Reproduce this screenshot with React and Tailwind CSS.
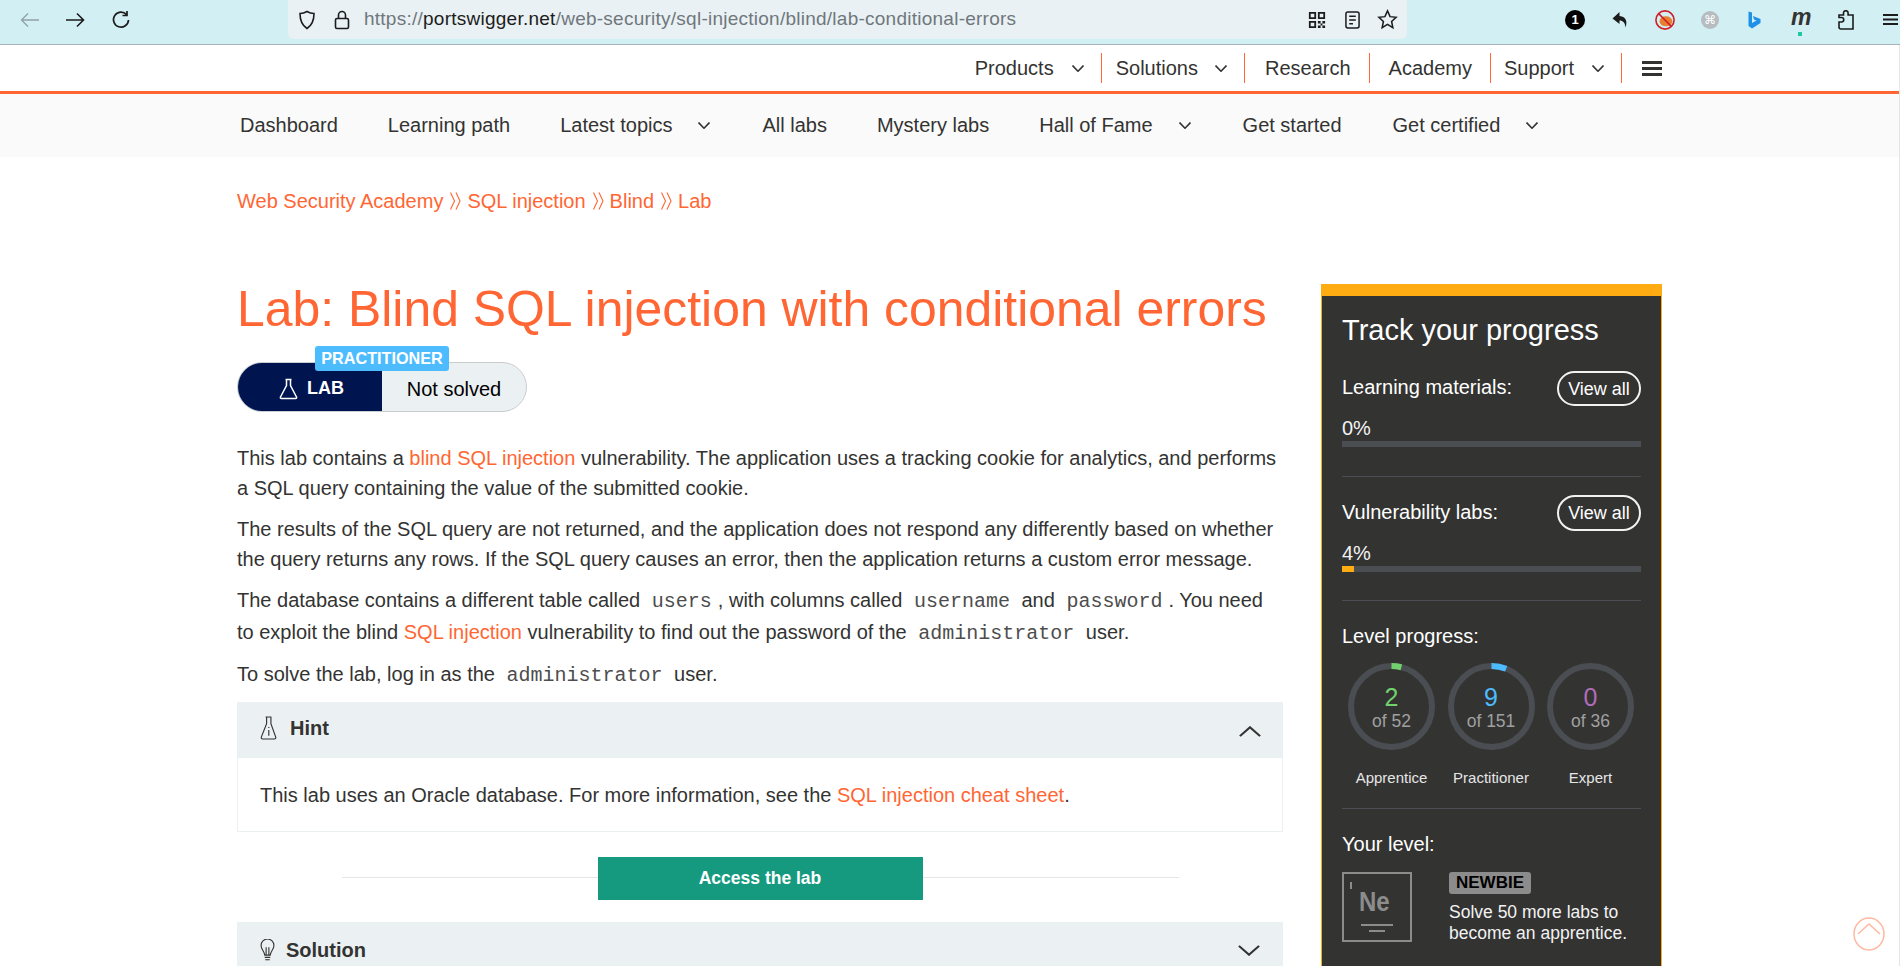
import React from "react";

const O = "text-[#ff6633]";
const Chev = ({ className = "", up = false, w = 12, h = 7, sw = 1.6 }) => (
  <svg width={w} height={h} viewBox="0 0 12 7" className={className} fill="none" stroke="currentColor" strokeWidth={sw} preserveAspectRatio="none">
    <path d={up ? "M0.5 6.5 6 0.8l5.5 5.7" : "M0.5 0.5 6 6.2l5.5-5.7"} />
  </svg>
);
const Code = ({ children }) => (
  <span className="font-['Liberation_Mono',monospace] text-[20px] leading-none mx-[6px] text-[#4d4d4d]">{children}</span>
);
const Link = ({ children }) => <a className={O}>{children}</a>;
const Crumb = () => (
  <svg width="11" height="18" viewBox="0 0 11 18" className="ml-[7px] mr-[6px]" fill="none" stroke="#ff6633" strokeWidth="1.1">
    <path d="M0.500 0.500 4.500 9l-4 8.500M6 0.500 10 9l-4 8.500" />
  </svg>
);

function BrowserBar() {
  return (
    <div className="h-[45px] bg-[#d2eff4] border-b border-[#a3b3b7] flex items-start text-[#1c1c1c]">
      <div className="w-[288px] h-[39px] flex items-center shrink-0">
        <svg width="20" height="16" viewBox="0 0 20 16" className="ml-[20px] text-[#8fa3a8]" fill="none" stroke="currentColor" strokeWidth="1.3"><path d="M19 8H1.500M8 1.500 1.500 8 8 14.500" /></svg>
        <svg width="20" height="16" viewBox="0 0 20 16" className="ml-[25px]" fill="none" stroke="currentColor" strokeWidth="1.6"><path d="M1 8h17.500M12 1.500 18.500 8 12 14.500" /></svg>
        <svg width="20" height="20" viewBox="0 0 20 20" className="ml-[26px]" fill="none" stroke="currentColor" strokeWidth="1.7"><path d="M15.500 4.500A7.500 7.500 0 1 0 17.500 10M16 1v4.500h-4.500" /></svg>
      </div>
      <div className="w-[1119px] h-[39px] bg-[#e9f1f4] rounded-b-[6px] flex items-center shrink-0">
        <svg width="18" height="20" viewBox="0 0 18 20" className="ml-[10px]" fill="none" stroke="currentColor" strokeWidth="1.6"><path d="M9 1.500c2.500 1.500 5 2 7 2 0 7-1.500 11.500-7 15-5.500-3.500-7-8-7-15 2 0 4.500-.5 7-2z" /></svg>
        <svg width="16" height="20" viewBox="0 0 16 20" className="ml-[18px]" fill="none" stroke="currentColor" strokeWidth="1.6"><rect x="1.500" y="8.500" width="13" height="10" rx="1.500" /><path d="M4.500 8.500V5a3.500 3.500 0 0 1 7 0v3.500" /></svg>
        <div className="ml-[14px] text-[19px] tracking-[0.25px] text-[#70777c] whitespace-nowrap">
          https://<span className="text-[#1c1c1c]">portswigger.net</span>/web-security/sql-injection/blind/lab-conditional-errors
        </div>
        <div className="ml-auto flex items-center">
          <svg width="18" height="18" viewBox="0 0 20 20" fill="currentColor"><path d="M1 1h8v8H1zM3 3v4h4V3zM11 1h8v8h-8zM13 3v4h4V3zM1 11h8v8H1zM3 13v4h4v-4zM11 11h3v3h-3zM16 11h3v3h-3zM14 14h2v2h-2zM11 16h3v3h-3zM16 16h3v3h-3z" /></svg>
          <svg width="15" height="20" viewBox="0 0 16 20" className="ml-[19px]" fill="none" stroke="currentColor" strokeWidth="1.6"><rect x="1" y="1.500" width="14" height="17" rx="2" /><path d="M4.500 6h7M4.500 10h7M4.500 14h4" /></svg>
          <svg width="21" height="21" viewBox="0 0 22 22" className="ml-[17px] mr-[9px]" fill="none" stroke="currentColor" strokeWidth="1.6"><path d="m11 2 2.700 6 6.300.7-4.700 4.300 1.300 6.500-5.600-3.300-5.600 3.300 1.300-6.500L2 8.700 8.300 8z" /></svg>
        </div>
      </div>
      <div className="flex-1 h-[39px] flex items-center relative">
        <span className="absolute left-[158px] w-[20px] h-[20px] rounded-full bg-black text-white text-[13px] font-bold flex items-center justify-center">1</span>
        <svg width="19" height="18" viewBox="0 0 18 18" className="absolute left-[204px]" fill="currentColor"><path d="M8 1 1 7.500 8 13V9.500c3.500 0 5.500 2 6 7 2-5.500 1-11-6-11.500z" /></svg>
        <svg width="20" height="20" viewBox="0 0 22 22" className="absolute left-[248px]"><circle cx="11" cy="11" r="10" fill="#d2eff4" stroke="#d0202a" strokeWidth="1.800" /><ellipse cx="12" cy="12.500" rx="7" ry="5.500" fill="#e8812f" /><path d="M4 4l14 14" stroke="#d0202a" strokeWidth="1.800" /></svg>
        <span className="absolute left-[294px] w-[18px] h-[18px] rounded-full bg-[#b6bcbf] text-white text-[12px] flex items-center justify-center font-['DejaVu_Sans',sans-serif]">⌘</span>
        <svg width="13" height="18" viewBox="0 0 13 18" className="absolute left-[341px]"><path d="M0.500 0.500 4 1.500V12l4.500-2.500L6 8.500 5 5l7.500 3v4L4 17.500.5 15z" fill="#1e90e8" /></svg>
        <span className="absolute left-[384px] top-[2px] text-[23px] font-bold italic text-[#333] leading-[30px]">m</span>
        <span className="absolute left-[391px] top-[32px] w-[4px] h-[4px] bg-[#1fc8a0]" />
        <svg width="16" height="20" viewBox="0 0 16 20" className="absolute left-[431px]" fill="none" stroke="currentColor" strokeWidth="1.6"><path d="M1 12h2.500a2 2 0 0 0 0-4.500H1V5h4.500V3a2.300 2.300 0 0 1 4.600 0v2H15v14H3a2 2 0 0 1-2-2z" /></svg>
        <svg width="15" height="11" viewBox="0 0 15 11" className="absolute left-[476px]" fill="none" stroke="currentColor" strokeWidth="1.800"><path d="M0 1h15M0 5.500h15M0 10h15" /></svg>
      </div>
    </div>
  );
}

function TopNav() {
  const Sep = () => <span className="w-px h-[30px] bg-[#ff6633]" />;
  return (
    <div className="h-[46px] flex items-center justify-end pr-[238px] text-[20px] text-[#333332]">
      <span>Products</span>
      <Chev className="ml-[18px] mr-[17px] mt-[1px]" />
      <Sep />
      <span className="ml-[14px]">Solutions</span>
      <Chev className="ml-[17px] mr-[17px] mt-[1px]" />
      <Sep />
      <span className="ml-[20px] mr-[18px]">Research</span>
      <Sep />
      <span className="ml-[19px] mr-[18px]">Academy</span>
      <Sep />
      <span className="ml-[13px]">Support</span>
      <Chev className="ml-[18px] mr-[17px] mt-[1px]" />
      <Sep />
      <span className="ml-[20px] flex flex-col gap-[3px]">
        <span className="block w-[20px] h-[3px] bg-[#333332]" />
        <span className="block w-[20px] h-[3px] bg-[#333332]" />
        <span className="block w-[20px] h-[3px] bg-[#333332]" />
      </span>
    </div>
  );
}

function SubNav() {
  return (
    <div className="h-[63px] bg-[#fafafa] flex items-center pl-[240px] pb-[2px] text-[20px] text-[#333332] whitespace-nowrap">
      <span>Dashboard</span>
      <span className="ml-[50px]">Learning path</span>
      <span className="ml-[50px]">Latest topics</span>
      <Chev className="ml-[26px] mt-[1px]" />
      <span className="ml-[52px]">All labs</span>
      <span className="ml-[50px]">Mystery labs</span>
      <span className="ml-[50px]">Hall of Fame</span>
      <Chev className="ml-[26px] mt-[1px]" />
      <span className="ml-[52px]">Get started</span>
      <span className="ml-[51px]">Get certified</span>
      <Chev className="ml-[26px] mt-[1px]" />
    </div>
  );
}

function Ring({ n, of, label, color, dash }) {
  const r = 40.5;
  const c = 2 * Math.PI * r;
  return (
    <div className="w-[87px] flex flex-col items-center">
      <div className="relative w-[87px] h-[87px]">
        <svg width="87" height="87" viewBox="0 0 87 87">
          <circle cx="43.5" cy="43.5" r={r} fill="none" stroke="#4a4d52" strokeWidth="6" />
          <circle cx="43.5" cy="43.5" r={r} fill="none" stroke={color} strokeWidth="6" strokeDasharray={`${dash} ${c}`} transform="rotate(-90 43.5 43.5)" />
        </svg>
        <div className="absolute inset-0 flex flex-col items-center pt-[20px]">
          <span className="text-[25px] leading-[29px]" style={{ color }}>{n}</span>
          <span className="text-[17.5px] leading-[18px] text-[#a0a0a0]">{of}</span>
        </div>
      </div>
      <span className="mt-[18px] text-[15px] leading-[20px] text-[#e6e6e6] whitespace-nowrap">{label}</span>
    </div>
  );
}

function Sidebar() {
  const Row = ({ title, pct, bar, h }) => (
    <div>
      <div className="flex justify-between items-center" style={{ height: h }}>
        <span className="text-[20px] text-white mt-[-3px]">{title}</span>
        <span className="w-[84px] h-full border-2 border-[#f2f2f2] rounded-full text-[18px] text-white flex items-center justify-center pt-[1px]">View all</span>
      </div>
      <div className="mt-[10px] text-[20px] leading-[24px] text-[#f2f2f2]">{pct}</div>
      <div className="h-[6px] mt-[1px] bg-[#4a4d52]">
        {bar && <div className="h-full w-[12px] bg-[#ffab12]" />}
      </div>
    </div>
  );
  return (
    <aside className="w-[341px] h-[700px] shrink-0 bg-[#333332] border-t-[12px] border-x border-[#ffab12] px-[20px] pt-[15px]">
      <h2 className="text-[29px] leading-[38px] text-white">Track your progress</h2>
      <div className="mt-[22px]"><Row title="Learning materials:" pct="0%" h={35} /></div>
      <div className="h-px bg-[#4a4d52] mt-[29px]" />
      <div className="mt-[18px]"><Row title="Vulnerability labs:" pct="4%" bar h={36} /></div>
      <div className="h-px bg-[#4a4d52] mt-[28px]" />
      <div className="mt-[23px] text-[20px] leading-[24px] text-white">Level progress:</div>
      <div className="mt-[15px] pl-[6px] pr-[7px] flex justify-between">
        <Ring n="2" of="of 52" label="Apprentice" color="#70d16d" dash={10} />
        <Ring n="9" of="of 151" label="Practitioner" color="#4cbcff" dash={15} />
        <Ring n="0" of="of 36" label="Expert" color="#b06cb8" dash={0} />
      </div>
      <div className="h-px bg-[#4a4d52] mt-[20px]" />
      <div className="mt-[23px] text-[20px] leading-[24px] text-white">Your level:</div>
      <div className="mt-[16px] flex">
        <div className="relative w-[70px] h-[70px] border-[2px] border-[#8c8c8c] shrink-0">
          <span className="absolute left-[15px] top-[12px] text-[24px] leading-[32px] font-bold text-[#8c8c8c] scale-y-[1.15]">Ne</span>
          <span className="absolute left-[6px] top-[8px] w-[2px] h-[7px] bg-[#8c8c8c]" />
          <span className="absolute left-[17px] top-[50px] w-[32px] h-[2px] bg-[#8c8c8c]" />
          <span className="absolute left-[25px] top-[56px] w-[16px] h-[2px] bg-[#8c8c8c]" />
        </div>
        <div className="ml-[37px]">
          <span className="block w-[82px] h-[22px] rounded-[3px] bg-[#8c8c8c] text-black text-[17px] font-bold leading-[22px] text-center">NEWBIE</span>
          <div className="mt-[8px] text-[17.5px] leading-[21px] text-[#f2f2f2] whitespace-nowrap">Solve 50 more labs to<br />become an apprentice.</div>
        </div>
      </div>
    </aside>
  );
}

function Main() {
  return (
    <div className="w-[1046px] shrink-0 text-[20px] text-[#333332]">
      <h1 className={`text-[49.9px] leading-[50px] ${O} whitespace-nowrap`}>Lab: Blind SQL injection with conditional errors</h1>
      <div className="relative mt-[28px] w-[290px] h-[50px] rounded-full border border-[#c9cdd0] bg-[#ebf0f2] flex">
        <div className="w-[144px] h-full bg-[#001550] rounded-l-full flex items-center justify-center text-white font-bold text-[18px] pl-[3px] pt-[3px]">
          <svg width="19" height="22" viewBox="0 0 19 22" fill="none" stroke="currentColor" strokeWidth="1.5" className="mr-[9px]"><path d="M6.500 1.500h6M7.500 1.500v6L1.500 19a1 1 0 0 0 1 1.500h14a1 1 0 0 0 1-1.500l-6-11.500v-6" /></svg>
          LAB
        </div>
        <div className="flex-1 flex items-center justify-center text-black text-[20px] pt-[3px]">Not solved</div>
        <span className="absolute left-[77px] top-[-17px] w-[134px] h-[25px] rounded-[3px] bg-[#4cbcff] text-white text-[16.2px] font-bold flex items-center justify-center">PRACTITIONER</span>
      </div>
      <p className="mt-[31px] leading-[30px]">This lab contains a <Link>blind SQL injection</Link> vulnerability. The application uses a tracking cookie for analytics, and performs a SQL query containing the value of the submitted cookie.</p>
      <p className="mt-[11px] leading-[30px]">The results of the SQL query are not returned, and the application does not respond any differently based on whether the query returns any rows. If the SQL query causes an error, then the application returns a custom error message.</p>
      <p className="mt-[10px] leading-[32px]">The database contains a different table called <Code>users</Code>, with columns called <Code>username</Code> and <Code>password</Code>. You need to exploit the blind <Link>SQL injection</Link> vulnerability to find out the password of the <Code>administrator</Code> user.</p>
      <p className="mt-[10px] leading-[32px]">To solve the lab, log in as the <Code>administrator</Code> user.</p>
      <div className="mt-[12px] border-x border-b border-[#ebf0f2]">
        <div className="h-[56px] bg-[#ebf0f2] flex items-center pl-[22px] pr-[22px] -mx-px">
          <svg width="20" height="24" viewBox="0 0 20 25" className="mt-[-5px]" fill="none" stroke="currentColor" strokeWidth="1.2"><path d="M6.500 1h6M7.500 1v7L2 22a1.500 1.500 0 0 0 1.500 2h12a1.500 1.500 0 0 0 1.500-2L12 8V1M9.800 11.500v1M9.800 14.500v6" /></svg>
          <span className="ml-[11px] font-bold mt-[-5px]">Hint</span>
          <Chev up w={22} h={11} sw={1.2} className="ml-auto mt-[2px]" />
        </div>
        <div className="h-[73px] pl-[22px] flex items-center">
          <span>This lab uses an Oracle database. For more information, see the <Link>SQL injection cheat sheet</Link>.</span>
        </div>
      </div>
      <div className="relative mt-[25px] flex justify-center">
        <div className="absolute left-[105px] right-[104px] top-[20px] h-px bg-[#e3e5e6]" />
        <div className="relative w-[325px] h-[43px] bg-[#159a7f] text-white font-bold text-[17.5px] flex items-center justify-center">Access the lab</div>
      </div>
      <div className="mt-[22px] h-[60px] bg-[#ebf0f2] flex items-center pl-[23px] pr-[23px]">
        <svg width="15" height="23" viewBox="0 0 16 25" className="mt-[-4px]" fill="none" stroke="currentColor" strokeWidth="1.200"><path d="M5 17.500C4.500 13 1 11 1 7a7 7 0 0 1 14 0c0 4-3.500 6-4 10.500zM6.500 17V9M9.500 17V9M5 20h6M5.500 22.500h5" /></svg>
        <span className="ml-[11px] font-bold mt-[-4px]">Solution</span>
        <Chev w={22} h={11} sw={1.2} className="ml-auto mt-[-4px]" />
      </div>
    </div>
  );
}

export default function App() {
  return (
    <div className="relative h-[966px] w-full overflow-hidden bg-white font-['Liberation_Sans',Arial,sans-serif]">
      <BrowserBar />
      <TopNav />
      <div className="h-[3px] bg-[#ff6633]" />
      <SubNav />
      <div className="pl-[237px] pt-[32px] text-[20px] leading-[24px] text-[#ff6633] flex items-center">
        <span>Web Security Academy</span>
        <Crumb />
        <span>SQL injection</span>
        <Crumb />
        <span>Blind</span>
        <Crumb />
        <span>Lab</span>
      </div>
      <div className="pl-[237px] pt-[71px] flex gap-[38px] items-start">
        <Main />
        <Sidebar />
      </div>
      <svg width="34" height="38" viewBox="0 0 34 38" className="absolute left-[1852px] top-[915px]" fill="none" stroke="#ffb8a0" strokeWidth="1.500">
        <ellipse cx="17" cy="19" rx="15" ry="16" />
        <path d="M6 19 17 9l11 10" />
      </svg>
      <div className="absolute right-0 top-[45px] bottom-0 w-px bg-[#e5e5e5]" />
    </div>
  );
}
